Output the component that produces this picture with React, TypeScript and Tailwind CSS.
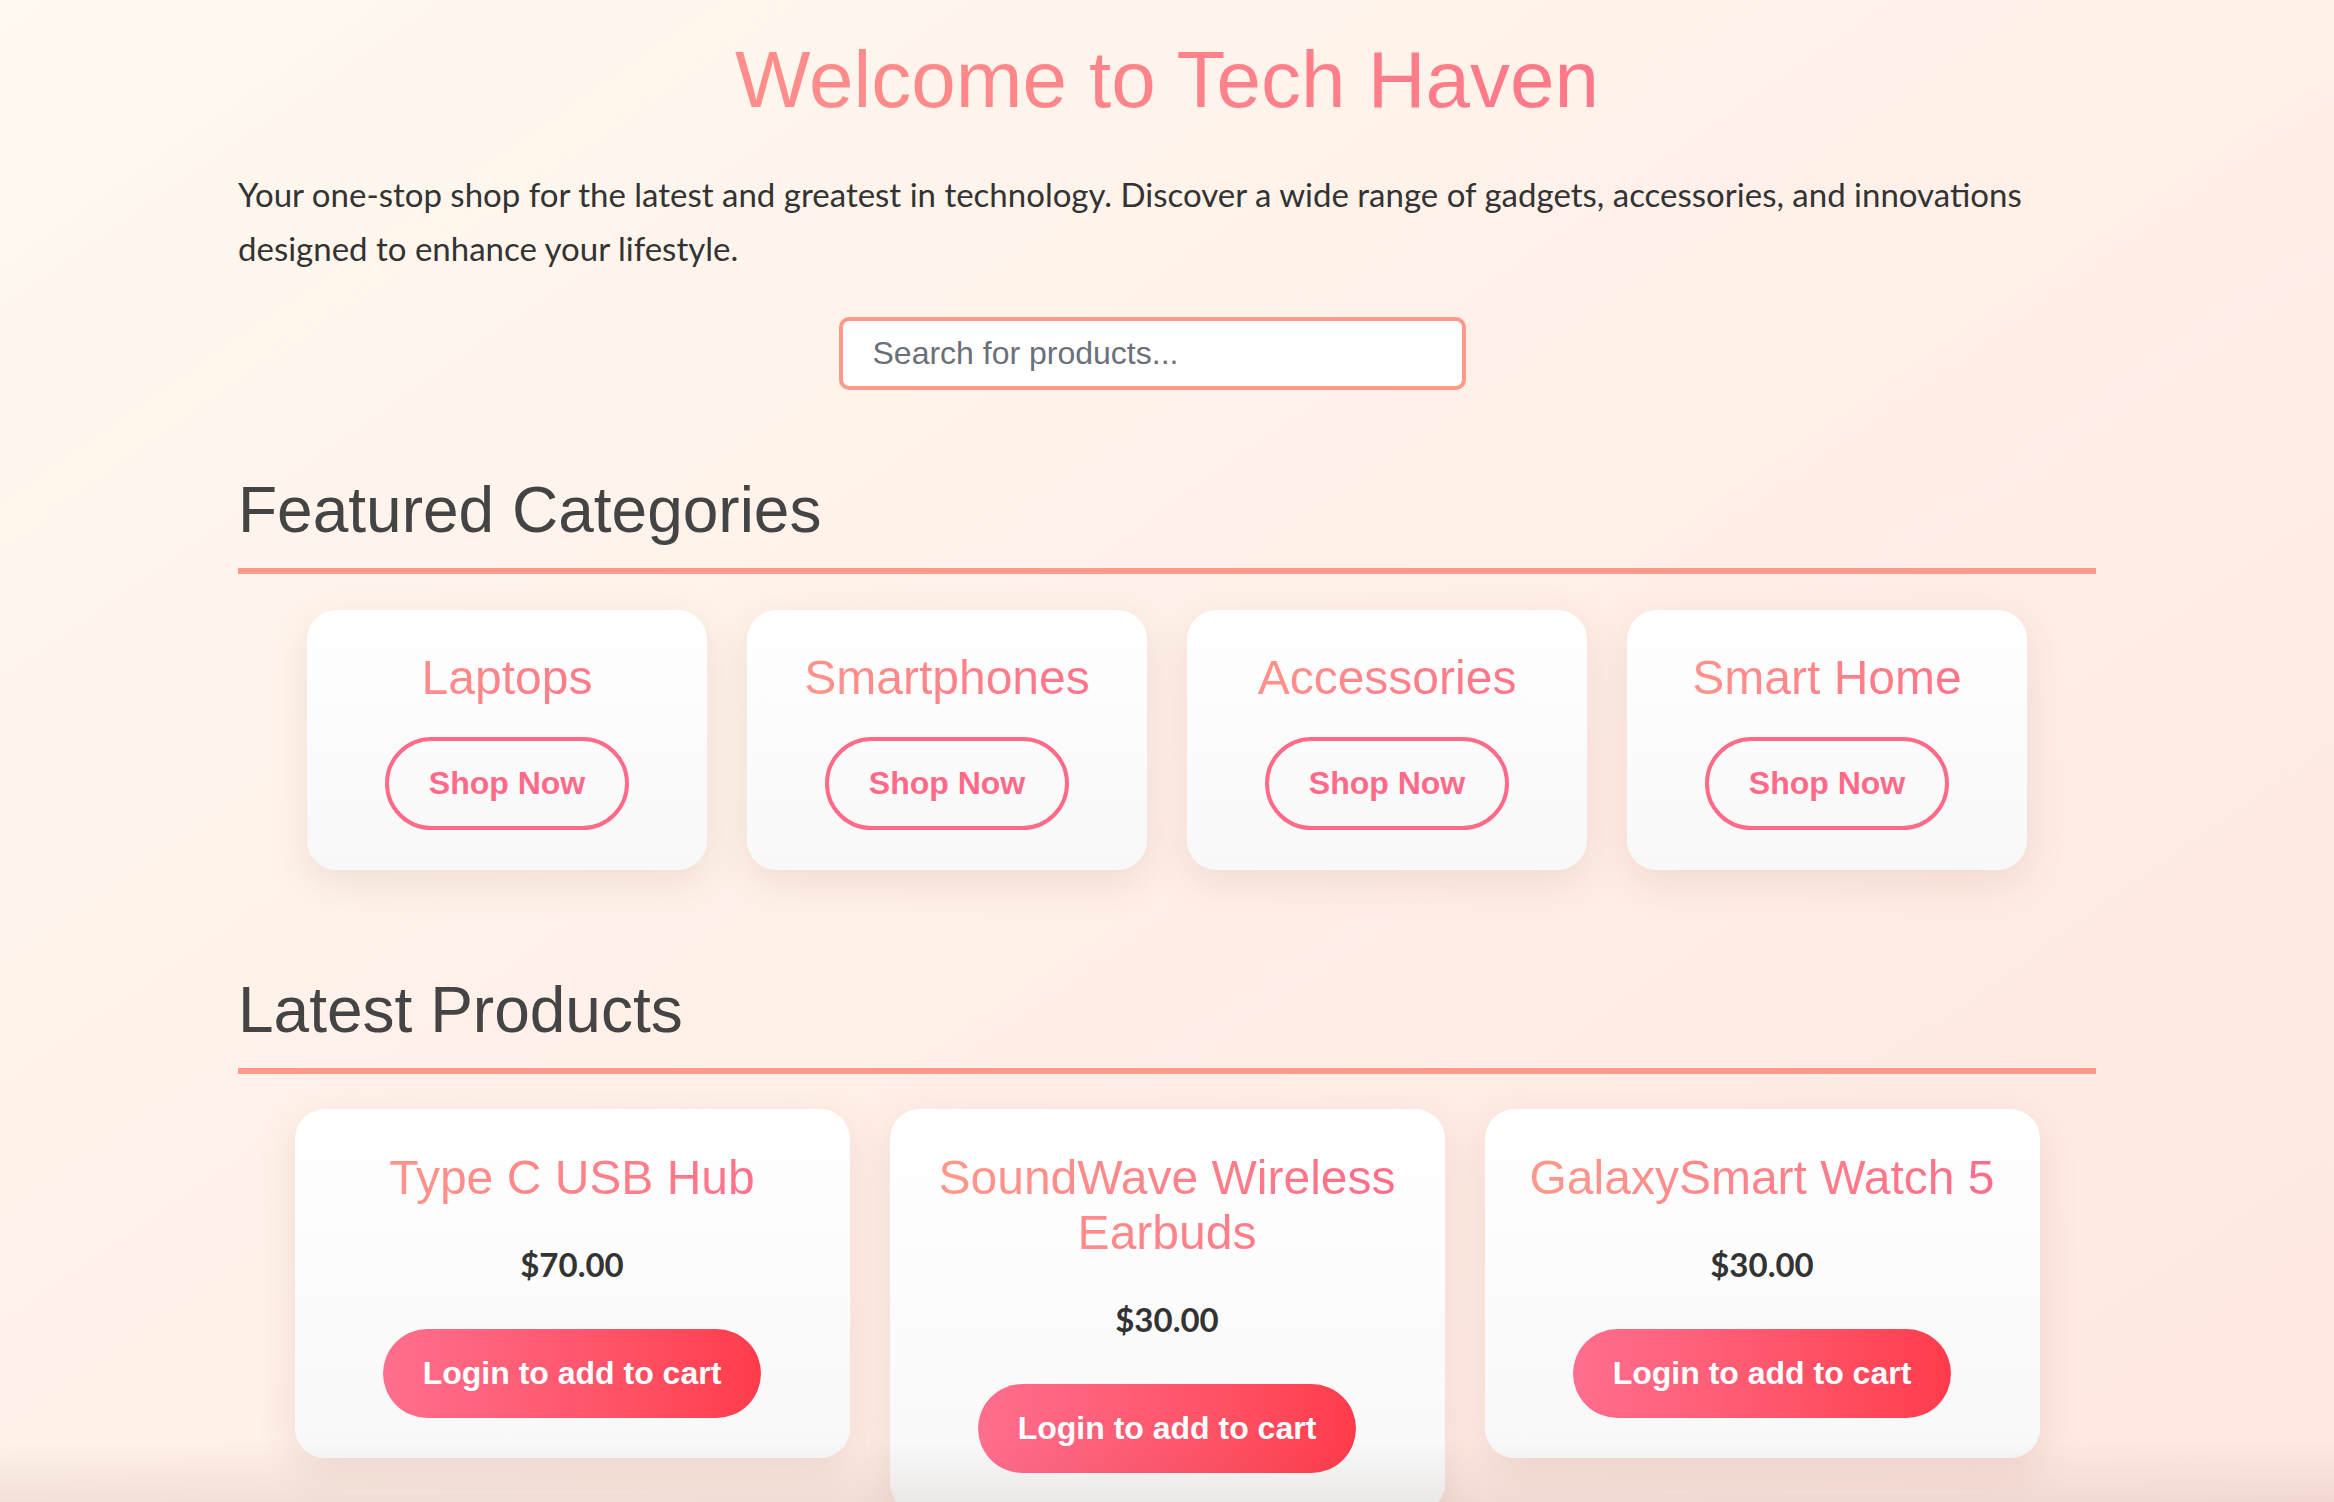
type Category = {
    name: string;
};

type Product = {
    id: number;
    name: string;
    price: string;
};

const categories: Category[] = [
    { name: "Laptops" },
    { name: "Smartphones" },
    { name: "Accessories" },
    { name: "Smart Home" },
];

const products: Product[] = [
    { id: 1, name: "Type C USB Hub", price: "$70.00" },
    { id: 2, name: "SoundWave Wireless Earbuds", price: "$30.00" },
    { id: 3, name: "GalaxySmart Watch 5", price: "$30.00" },
];

const arial = "font-['Liberation_Sans',Arial,sans-serif]";
const gill = "font-['Lato','Open_Sans',sans-serif]";

function SectionTitle({ children }: { children: string }) {
    return (
        <h2 className={`${arial} text-[64px] leading-[74px] text-[#444] pt-[3px] pb-[21px] border-b-[6px] border-[#ff9a8b]`}>
            {children}
        </h2>
    );
}

function CategoryCard({ category }: { category: Category }) {
    return (
        <article className="w-[400px] rounded-[30px] bg-gradient-to-b from-white to-[#f8f8f8] shadow-[0_12px_40px_rgba(120,70,50,0.12)] pt-[40px] pb-[40px] flex flex-col items-center">
            <h3 className={`${arial} w-full text-center text-[48px] leading-[55px] bg-gradient-to-r from-[#ff9a8b] to-[#ff6a88] bg-clip-text text-transparent`}>
                {category.name}
            </h3>
            <button className={`${arial} mt-[32px] px-[40px] py-[24px] rounded-full border-[4px] border-[#ff6a88] text-[#ff6a88] text-[32px] leading-[37px] font-bold`}>
                Shop Now
            </button>
        </article>
    );
}

function ProductCard({ product }: { product: Product }) {
    return (
        <article className="w-[555px] rounded-[30px] bg-gradient-to-b from-white to-[#f8f8f8] shadow-[0_12px_40px_rgba(120,70,50,0.12)] pt-[41px] pb-[40px] px-[30px] flex flex-col items-center">
            <h3 className={`${arial} w-full text-center text-[48px] leading-[55px] bg-gradient-to-r from-[#ff9a8b] to-[#ff6a88] bg-clip-text text-transparent`}>
                {product.name}
            </h3>
            <p className={`${gill} mt-[32px] text-[33px] leading-[54px] font-bold text-[#333]`}>{product.price}</p>
            <button className={`${arial} mt-[38px] px-[40px] py-[26px] rounded-full bg-gradient-to-r from-[#ff6e8e] to-[#ff3b4b] text-white text-[32px] leading-[37px] font-bold`}>
                Login to add to cart
            </button>
        </article>
    );
}

export default function App() {
    return (
        <div className="min-h-screen w-full bg-gradient-to-br from-[#fff9ef] to-[#ffe6e1] overflow-hidden">
            <main className="w-[1858px] mx-auto pt-[34px] pb-[120px]">
                <h1 className={`${arial} text-center text-[80px] leading-[92px] bg-gradient-to-r from-[#ff9a8b] to-[#ff6a88] bg-clip-text text-transparent`}>
                    Welcome to Tech Haven
                </h1>
                <p className={`${gill} mt-[41px] text-[33px] leading-[54px] text-[#333]`}>
                    Your one-stop shop for the latest and greatest in technology. Discover a wide range of gadgets, accessories, and innovations designed to enhance your lifestyle.
                </p>
                <div className="mt-[42px] flex justify-center pr-[30px]">
                    <input
                        type="text"
                        placeholder="Search for products..."
                        className={`${arial} w-[627px] h-[73px] px-[30px] rounded-[10px] border-[4px] border-[#ff9a8b] bg-white text-[32px] text-[#333] placeholder:text-[#6b7079] outline-none`}
                    />
                </div>

                <section className="mt-[80px]">
                    <SectionTitle>Featured Categories</SectionTitle>
                    <div className="mt-[36px] flex justify-center gap-[40px]">
                        {categories.map((category) => (
                            <CategoryCard key={category.name} category={category} />
                        ))}
                    </div>
                </section>

                <section className="mt-[100px]">
                    <SectionTitle>Latest Products</SectionTitle>
                    <div className="mt-[35px] flex justify-center items-start gap-[40px]">
                        {products.map((product) => (
                            <ProductCard key={product.id} product={product} />
                        ))}
                    </div>
                </section>
            </main>
            <div className="fixed bottom-0 left-0 right-0 h-[60px] pointer-events-none bg-gradient-to-b from-transparent to-[rgba(90,50,40,0.08)]" />
        </div>
    );
}
